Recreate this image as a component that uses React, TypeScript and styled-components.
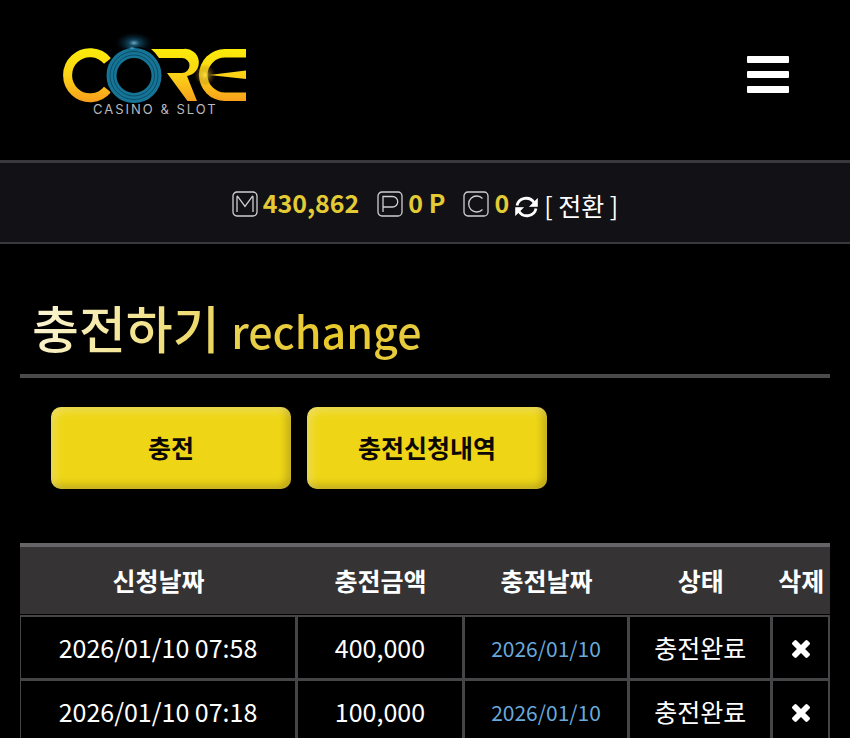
import React from "react";
import styled, { createGlobalStyle } from "styled-components";

const GlobalStyle = createGlobalStyle`
  *, *::before, *::after { box-sizing: border-box; }
  html { background: #000; }
  body {
    margin: 0;
    background: #000;
    color: #fff;
    font-family: "Noto Sans CJK KR", "Noto Sans", sans-serif;
    font-size: 25px;
    line-height: 36px;
  }
  button { font: inherit; color: inherit; cursor: pointer; }
`;

const Header = styled.header`
  display: flex;
  align-items: flex-start;
  justify-content: space-between;
  height: 160px;
  padding: 30px 61px 0 50px;
`;

const LogoLink = styled.a`
  display: block;
  color: #b9b9bd;
  svg { display: block; width: 210px; height: 95px; }
`;

const PlainButton = styled.button`
  display: inline-flex;
  align-items: center;
  justify-content: center;
  padding: 0;
  border: 0;
  background: none;
  svg { display: block; }
`;

const MenuButton = styled(PlainButton)`
  margin-top: 26px;
`;

const BalanceBar = styled.section`
  display: flex;
  align-items: center;
  justify-content: center;
  height: 84px;
  padding-top: 2px;
  background: #121115;
  border-top: 3px solid #39383c;
  border-bottom: 2px solid #39383c;
`;

const Balance = styled.div<{ $gap: number }>`
  display: flex;
  align-items: center;
  gap: 5px;
  margin-right: ${(p) => p.$gap}px;
  svg { display: block; }
`;

const Amount = styled.strong`
  padding-bottom: 3px;
  color: #e3cb35;
  font-size: 25px;
  font-weight: 700;
`;

const Transfer = styled(PlainButton)`
  gap: 6px;
  padding-top: 2px;
  svg { margin-top: 5px; }
`;

const Main = styled.main`
  padding: 46px 20px 0;
`;

const Title = styled.h1`
  margin: 0;
  padding: 0 12px;
  height: 88px;
  border-bottom: 4px solid #4b494b;
  font-size: 51px;
  line-height: 74px;
  font-weight: 500;
`;

const TitleText = styled.span`
  background: linear-gradient(115deg, #fbf6dc 0%, #f3e490 30%, #e8d04c 55%, #e8c92a 75%, #e6cc45 100%);
  background-clip: text;
  -webkit-background-clip: text;
  color: transparent;
`;

const Subtitle = styled.small`
  font-size: 43px;
`;

const Tabs = styled.nav`
  display: flex;
  gap: 16px;
  padding: 29px 31px 54px;
`;

const Tab = styled.button`
  width: 240px;
  height: 82px;
  padding: 0 0 2px;
  border: 0;
  border-radius: 10px;
  background: #eed617;
  box-shadow: inset 3px 3px 8px rgba(255, 255, 255, 0.35), inset -3px -3px 8px rgba(60, 40, 0, 0.32);
  && { color: #0c0803; font-weight: 700; }
`;

const History = styled.table`
  width: 100%;
  table-layout: fixed;
  border-collapse: separate;
  border-spacing: 0;
  text-align: center;
`;

const Col = styled.col<{ $share: number }>`
  width: ${(p) => p.$share}%;
`;

const HeadCell = styled.th`
  height: 72px;
  padding: 0 0 2px;
  background: #353334;
  border-top: 4px solid #666466;
  border-bottom: 1px solid #000;
  font-weight: 700;
  white-space: nowrap;
`;

const Cell = styled.td`
  height: 64px;
  padding: 0 0 2px;
  border: 1px solid #454446;
  border-width: 2px 2px 1px 1px;
  white-space: nowrap;
`;

const Completed = styled.span`
  color: #69a9dc;
  font-size: 21px;
`;

const DeleteButton = styled(PlainButton)`
  padding-top: 3px;
`;

const Frame = ({ children }: { children: React.ReactNode }) => (
  <svg width="26" height="26" viewBox="0 0 26 26" fill="none" stroke="#cfcfd2" strokeWidth="1.3" aria-hidden="true">
    <rect x="1" y="1" width="24" height="24" rx="4" />
    {children}
  </svg>
);

const MoneyIcon = () => (
  <Frame><path d="M5 21V6.200Q5 4.500 6 5.800L13 15.500L20 5.800Q21 4.500 21 6.200V21" /></Frame>
);
const PointIcon = () => (
  <Frame><path d="M6 21V5.500H15.500A5.200 5.200 0 0 1 15.500 16H6" /></Frame>
);
const CompIcon = () => (
  <Frame><path d="M19.500 7.500A8 8 0 1 0 19.500 18.500" /></Frame>
);

const RefreshIcon = () => (
  <svg width="23" height="22" viewBox="0 0 23 22" aria-hidden="true">
    <g fill="none" stroke="#fff" strokeWidth="2.800">
      <path d="M2 9.500A9.300 9 0 0 1 19 6.500" />
      <path d="M21 12.500A9.300 9 0 0 1 4 15.500" />
    </g>
    <path d="M22.500 2.500V10.500H14.500Z M0.500 19.500V11.500H8.500Z" fill="#fff" stroke="#fff" strokeWidth="0.600" strokeLinejoin="round" />
  </svg>
);

const TimesIcon = () => (
  <svg width="18" height="18" viewBox="302 366 1188 1188" fill="#fff" aria-hidden="true">
    <path d="M1490 1322q0 40-28 68l-136 136q-28 28-68 28t-68-28l-294-294-294 294q-28 28-68 28t-68-28l-136-136q-28-28-28-68t28-68l294-294-294-294q-28-28-28-68t28-68l136-136q28-28 68-28t68 28l294 294 294-294q28-28 68-28t68 28l136 136q28 28 28 68t-28 68l-294 294 294 294q28 28 28 68z" />
  </svg>
);

const MenuIcon = () => (
  <svg width="42" height="37" viewBox="0 0 42 37" fill="#fff" aria-hidden="true">
    <rect y="0" width="42" height="7" rx="1" />
    <rect y="15" width="42" height="7" rx="1" />
    <rect y="30" width="42" height="7" rx="1" />
  </svg>
);

const LogoText = styled.text`
  font-family: Inter, sans-serif;
  font-size: 13px;
  letter-spacing: 2px;
  fill: #b9b9bd;
`;

const Logo = () => (
  <svg viewBox="0 0 210 95" role="img" aria-label="CORE Casino &amp; Slot">
    <defs>
      <linearGradient id="gold" gradientUnits="userSpaceOnUse" x1="0" y1="18" x2="0" y2="72">
        <stop offset="0" stopColor="#fbec08" />
        <stop offset="0.5" stopColor="#fbd317" />
        <stop offset="1" stopColor="#f99f1c" />
      </linearGradient>
      <radialGradient id="blueGlow">
        <stop offset="0" stopColor="#8fd8f5" stopOpacity="0.8" />
        <stop offset="0.3" stopColor="#1f7fae" stopOpacity="0.5" />
        <stop offset="1" stopColor="#05263b" stopOpacity="0" />
      </radialGradient>
      <radialGradient id="goldGlow">
        <stop offset="0" stopColor="#ffe64d" stopOpacity="0.8" />
        <stop offset="1" stopColor="#7a4b00" stopOpacity="0" />
      </radialGradient>
    </defs>
    <path d="M57.500 31A22.500 22.500 0 1 0 57.500 59.500" fill="none" stroke="url(#gold)" strokeWidth="9" />
    <path d="M101 19H133.500A13.500 13.500 0 0 1 137 46L147 71H137.500L117 43H132A7.500 7.500 0 0 0 132 28H109Q106 23 101 19Z" fill="url(#gold)" />
    <path d="M196 19H175A26 26 0 0 0 175 71H196V62.500H175A17.300 17.300 0 0 1 175 27.500H196Z" fill="url(#gold)" />
    <path d="M196 40.500V49L159 45Z" fill="url(#gold)" />
    <ellipse cx="84" cy="13" rx="19" ry="11" fill="url(#blueGlow)" />
    <circle cx="84" cy="45.500" r="29" fill="#000" />
    <circle cx="84" cy="45.500" r="22.500" fill="none" stroke="#167596" strokeWidth="10" />
    <circle cx="84" cy="45.500" r="24" fill="none" stroke="#0b4d68" strokeWidth="1" />
    <circle cx="84" cy="45.500" r="20.500" fill="none" stroke="#0b4d68" strokeWidth="1" />
    <ellipse cx="82" cy="18" rx="9" ry="4" fill="url(#blueGlow)" />
    <circle cx="155" cy="45" r="11" fill="url(#goldGlow)" />
    <LogoText x="43" y="84">CASINO &amp; SLOT</LogoText>
  </svg>
);

const columns = [
  { label: "신청날짜", share: 34.2 },
  { label: "충전금액", share: 20.6 },
  { label: "충전날짜", share: 20.4 },
  { label: "상태", share: 17.7 },
  { label: "삭제", share: 7.1 },
];

const rows = [
  { requested: "2026/01/10 07:58", amount: "400,000", completed: "2026/01/10", status: "충전완료" },
  { requested: "2026/01/10 07:18", amount: "100,000", completed: "2026/01/10", status: "충전완료" },
];

export default function App() {
  return (
    <>
      <GlobalStyle />
      <Header>
        <LogoLink href="#"><Logo /></LogoLink>
        <MenuButton type="button" aria-label="메뉴"><MenuIcon /></MenuButton>
      </Header>
      <BalanceBar>
        <Balance $gap={18}><MoneyIcon /><Amount>430,862</Amount></Balance>
        <Balance $gap={18}><PointIcon /><Amount>0 P</Amount></Balance>
        <Balance $gap={6}><CompIcon /><Amount>0</Amount></Balance>
        <Transfer type="button"><RefreshIcon />[ 전환 ]</Transfer>
      </BalanceBar>
      <Main>
        <Title><TitleText>충전하기 <Subtitle>rechange</Subtitle></TitleText></Title>
        <Tabs>
          <Tab type="button">충전</Tab>
          <Tab type="button">충전신청내역</Tab>
        </Tabs>
        <History>
          <colgroup>
            {columns.map((c) => <Col key={c.label} $share={c.share} />)}
          </colgroup>
          <thead>
            <tr>{columns.map((c) => <HeadCell key={c.label} scope="col">{c.label}</HeadCell>)}</tr>
          </thead>
          <tbody>
            {rows.map((r) => (
              <tr key={r.requested}>
                <Cell>{r.requested}</Cell>
                <Cell>{r.amount}</Cell>
                <Cell><Completed>{r.completed}</Completed></Cell>
                <Cell>{r.status}</Cell>
                <Cell><DeleteButton type="button" aria-label="삭제"><TimesIcon /></DeleteButton></Cell>
              </tr>
            ))}
          </tbody>
        </History>
      </Main>
    </>
  );
}
